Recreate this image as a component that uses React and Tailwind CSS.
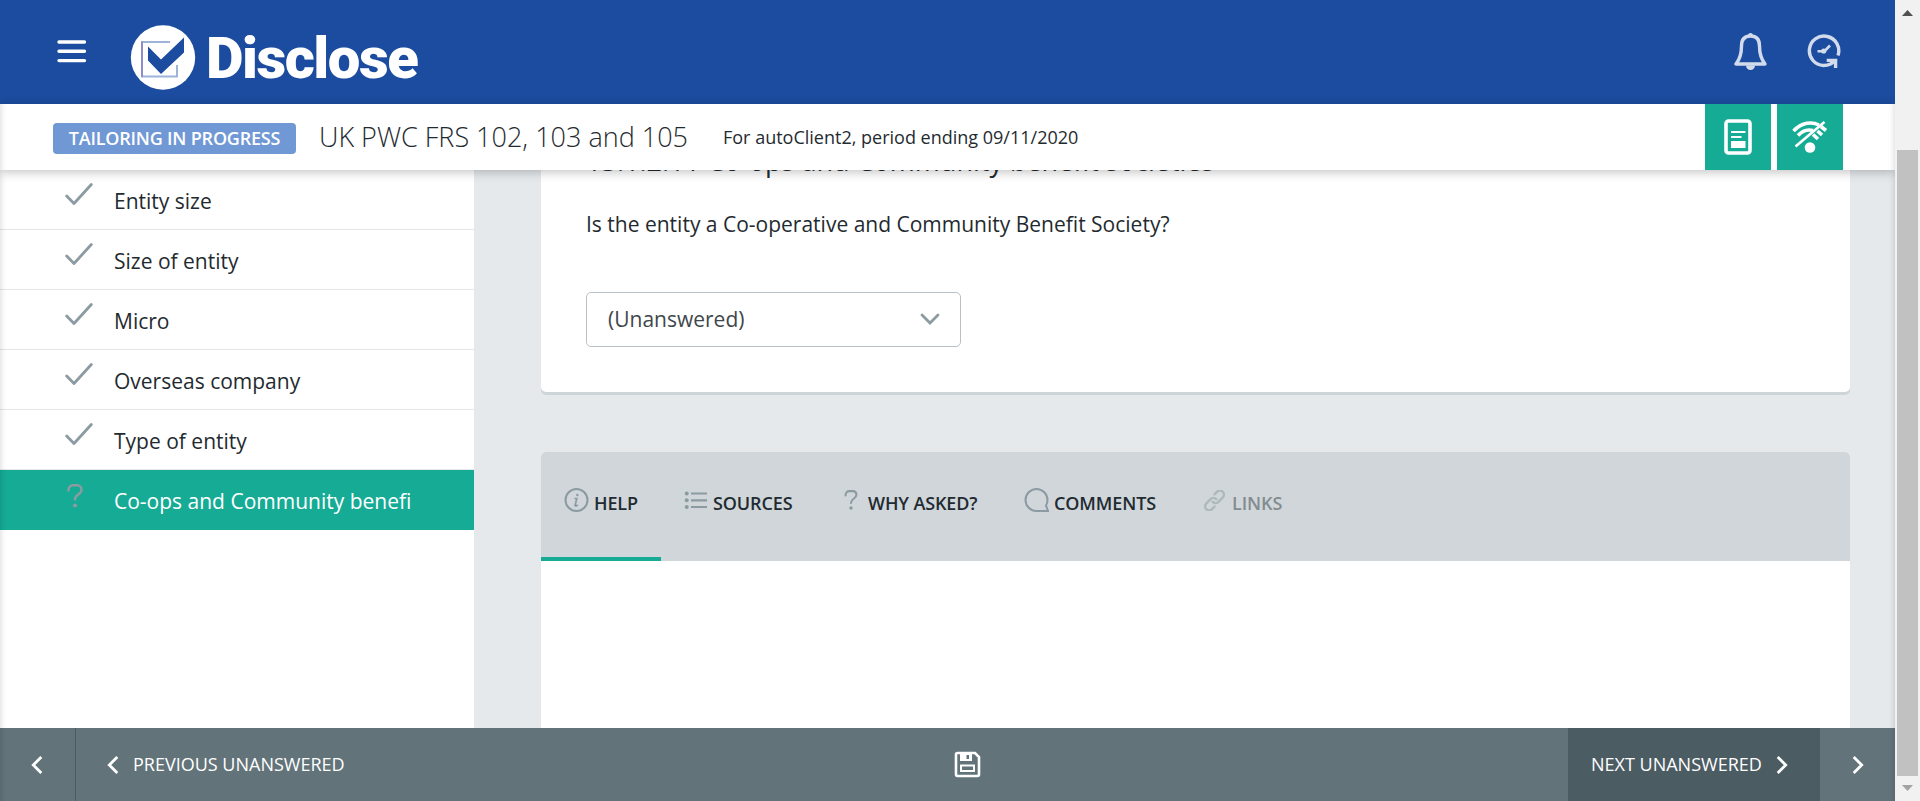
import React from "react";

const items = ["Entity size", "Size of entity", "Micro", "Overseas company", "Type of entity"];

function Logo() {
  return (
    <div className="ml-[44px] mt-[9px] flex items-center">
      <svg width="66" height="66" viewBox="0 0 66 66">
        <circle cx="33" cy="32.500" r="32.200" fill="#fff" />
        <path d="M40 17H12V51.500H47V40" fill="none" stroke="#9db3d8" strokeWidth="2" />
        <path d="M12 16.500V52" stroke="#8a7cc4" strokeWidth="1.4" />
        <path d="M18 21.500L31 34.500L54 12.500V27.500L31 49L18 35.500Z" fill="#1c4c9f" />
      </svg>
      <span className="ml-[10px] whitespace-nowrap font-[Roboto] text-[58px] leading-[66px] font-black tracking-[-1.5px] text-white">
        Disclose
      </span>
    </div>
  );
}

function Check() {
  return (
    <svg className="mt-[12px] ml-[65px] shrink-0" width="28" height="24" viewBox="0 0 28 24" fill="none" stroke="#8b9ba1" strokeWidth="2.8" strokeLinecap="round" strokeLinejoin="round">
      <path d="M1.7 14L9 21.5L26.3 2.500" />
    </svg>
  );
}

function Question({ className }) {
  return (
    <svg className={className} width="16" height="24" viewBox="0 0 16 24" fill="none" stroke="#8b9ba1" strokeWidth="2.4" strokeLinecap="round">
      <path d="M1.5 6.5C1.5 3 3.5 1.3 6 1.3H10C12.7 1.3 14.5 3 14.5 5.8C14.5 11 8 10 8 15.5" />
      <circle cx="8" cy="21.5" r="2.1" fill="#8b9ba1" stroke="none" />
    </svg>
  );
}

function Tab({ children, className }) {
  return <span className={"mt-[3px] whitespace-nowrap text-[18px] font-semibold tracking-[-0.12px] leading-[24px] " + className}>{children}</span>;
}

function Chevron({ left }) {
  return (
    <svg className="shrink-0" width="12" height="18" viewBox="0 0 12 18" fill="none" stroke="#fff" strokeWidth="2.8">
      <path d={left ? "M10.3 1L2.3 9L10.3 17" : "M1.7 1L9.7 9L1.7 17"} />
    </svg>
  );
}

export default function App() {
  return (
    <div className="flex h-[801px] w-[1920px] overflow-hidden bg-white font-['Open_Sans',sans-serif] text-[#1f2b30]">
      <div className="relative flex w-[1895px] shrink-0 flex-col overflow-hidden">
        <header className="flex h-[104px] shrink-0 items-start bg-[#1c4c9f]">
          <svg className="mt-[39px] ml-[57px]" width="30" height="25" viewBox="0 0 30 25" stroke="#fff" strokeWidth="3.4" strokeLinecap="round">
            <path d="M2 3H27.500M2 12.300H27.500M2 21.600H27.500" />
          </svg>
          <div className="mt-[16px] -ml-px"><Logo /></div>
          <div className="ml-auto mr-[54px] mt-[32px] flex">
            <svg width="34" height="40" viewBox="0.500 0 34 40" fill="none" stroke="#d2dbec" strokeWidth="3.4" strokeLinejoin="round">
              <path d="M17 4C10 4 8 9 8 14C8 22 6.500 27 2.500 32H31.500C27.500 27 26 22 26 14C26 9 24 4 17 4Z" />
              <path d="M14.500 3.500A2.500 2.500 0 0 1 19.500 3.500ZM12.500 33.500H21.500A4.500 4.500 0 0 1 12.500 33.500Z" fill="#d2dbec" stroke="none" />
            </svg>
            <svg className="ml-[39px]" width="34" height="40" viewBox="0 0 34 40" fill="none" stroke="#d2dbec" strokeWidth="3.400">
              <path d="M31 23.500A14.700 14.700 0 1 0 16.500 33.500Q20.500 33.500 23.500 32L28 29" />
              <path d="M19.700 28.400H28.600V36" />
              <path d="M10.500 19.200H17.500L23 13.500" strokeWidth="2.600" />
              <circle cx="16.700" cy="19" r="2.600" fill="#d2dbec" stroke="none" />
            </svg>
          </div>
        </header>

        <div className="z-10 flex h-[66px] shrink-0 items-center bg-white pl-[53px] shadow-[0_2px_10px_rgba(0,0,0,0.25)]">
          <div className="mt-[2px] flex h-[31px] w-[243px] items-center justify-center rounded-[4px] bg-[#6f98d5] text-[18px] font-semibold whitespace-nowrap text-white">
            <span className="tracking-[-0.2px]">TAILORING IN PROGRESS</span>
          </div>
          <span className="ml-[23px] w-[404px] text-[27px] font-light whitespace-nowrap">UK PWC FRS 102, 103 and 105</span>
          <span className="text-[18px] whitespace-nowrap">For autoClient2, period ending 09/11/2020</span>
          <div className="mr-[52px] ml-auto flex gap-[6px]">
            <div className="flex h-[66px] w-[66px] items-center justify-center bg-[#15ab95]">
              <svg width="28" height="36" viewBox="0 0 28 36" fill="none" stroke="#fff">
                <rect x="2" y="2" width="24" height="32" rx="2.500" strokeWidth="3.600" />
                <path d="M7 13H21.500M7 18H17.500" strokeWidth="2" />
                <path d="M7 22H21.500V29H7Z" fill="#fff" stroke="none" />
              </svg>
            </div>
            <div className="flex h-[66px] w-[66px] items-center justify-center bg-[#15ab95]">
              <svg width="36" height="34" viewBox="0 0 36 34" fill="none" stroke="#fff" strokeWidth="3.600">
                <path d="M1.500 11C10 2 20 1.500 27 5M6 15.500C11 10 17 9.500 21 10.500" />
                <path d="M29 6.500L34 10.500M25.500 11L30 15M21 14.500L26 19" />
                <path d="M3.500 26.500L32.500 2" strokeWidth="2.600" />
                <circle cx="18" cy="27.500" r="5.300" fill="#fff" stroke="none" />
              </svg>
            </div>
          </div>
        </div>

        <div className="flex h-[558px] shrink-0 overflow-hidden bg-[#e5e9ec]">
          <aside className="w-[474px] shrink-0 bg-white text-[21px]">
            {items.map((t) => (
              <div key={t} className="flex h-[60px] items-start border-b border-[#e5e8ea]">
                <Check />
                <span className="ml-[21px] leading-[62px]">{t}</span>
              </div>
            ))}
            <div className="flex h-[60px] items-start bg-[#15ab95] text-white">
              <Question className="mt-[14px] ml-[67px]" />
              <span className="ml-[31px] leading-[62px]">Co-ops and Community benefi</span>
            </div>
          </aside>
          <main className="ml-[67px] flex w-[1309px] flex-col">
            <section className="h-[222px] shrink-0 rounded-b-[5px] bg-white pl-[45px] shadow-[0_3px_0_#ced5d9]">
              <div className="flex h-[39px] items-end overflow-hidden">
                <h1 className="mb-[31px] -mt-[26px] text-[27px] leading-[34px] whitespace-pre">13.1.2.11 Co-ops and Community benefit societies</h1>
              </div>
              <p className="text-[21px] leading-[30px] whitespace-nowrap">Is the entity a Co-operative and Community Benefit Society?</p>
              <div className="mt-[53px] flex h-[55px] w-[375px] items-center justify-between rounded-[5px] border border-[#b9c1c7] pr-[20px] pl-[21px] text-[21px] text-[#40474b]">
                (Unanswered)
                <svg width="20" height="13" viewBox="0 0 20 13" fill="none" stroke="#8b9ba1" strokeWidth="2.800" strokeLinecap="round"><path d="M2 2L10 10L18 2" /></svg>
              </div>
            </section>
            <section className="mt-[60px] flex flex-1 flex-col rounded-t-[5px] bg-white">
              <nav className="flex h-[109px] items-start rounded-t-[5px] bg-[#d1d6da] pt-[36px]">
                <div className="-mt-[36px] flex h-[109px] w-[120px] shrink-0 border-b-4 border-[#15ab95] pt-[36px]">
                  <svg className="ml-[23px] shrink-0" width="25" height="25" viewBox="0 0 25 25" fill="none" stroke="#8b9ba1" strokeWidth="2">
                    <circle cx="12.500" cy="12" r="11" />
                    <path d="M10.500 10.500H12.800L11 17.500Q11 18.500 14 17" strokeWidth="1.700" />
                    <circle cx="13.300" cy="7" r="1.200" fill="#8b9ba1" stroke="none" />
                  </svg>
                  <Tab className="ml-[5px]">HELP</Tab>
                </div>
                <svg className="mt-[3px] ml-[23px] shrink-0" width="24" height="19" viewBox="0 0 24 19" fill="#8b9ba1" stroke="#8b9ba1" strokeWidth="2.200">
                  <path d="M7 2.500H23M7 9.300H23M7 16H23" />
                  <g stroke="none"><circle cx="2.700" cy="2.500" r="2" /><circle cx="2.700" cy="9.300" r="2" /><circle cx="2.700" cy="16" r="2" /></g>
                </svg>
                <Tab className="ml-[5px] w-[131px]">SOURCES</Tab>
                <svg className="mt-[2px] shrink-0" width="14" height="20" viewBox="0 0 16 24" fill="none" stroke="#8b9ba1" strokeWidth="2.500" strokeLinecap="round">
                  <path d="M1.500 6.500C1.500 3 3.500 1.300 6 1.300H10C12.700 1.300 14.500 3 14.500 5.800C14.500 11 8 10 8 15.500" />
                  <circle cx="8" cy="21.500" r="2.100" fill="#8b9ba1" stroke="none" />
                </svg>
                <Tab className="ml-[10px] w-[156px]">WHY ASKED?</Tab>
                <svg className="shrink-0" width="25" height="25" viewBox="0 0 25 25" fill="none" stroke="#8b9ba1" strokeWidth="2">
                  <path d="M23.500 12A11 11 0 1 0 12.500 23H24L22 17.500Q23.500 15 23.500 12Z" />
                </svg>
                <Tab className="ml-[5px] w-[150px]">COMMENTS</Tab>
                <svg className="mt-[2px] shrink-0" width="21" height="21" viewBox="0 0 24 24" fill="none" stroke="#afb8bd" strokeWidth="2.800" strokeLinecap="round">
                  <path d="M10 13.500a4.600 4.600 0 0 0 6.500 0l5-5a4.600 4.600 0 0 0-6.500-6.500l-3 3M14 10.500a4.600 4.600 0 0 0-6.500 0l-5 5a4.600 4.600 0 0 0 6.500 6.500l3-3" />
                </svg>
                <Tab className="ml-[7px] text-[#838c91]">LINKS</Tab>
              </nav>
            </section>
          </main>
        </div>

        <footer className="flex h-[73px] shrink-0 items-center bg-[#62737a] text-[18px] text-white">
          <div className="flex h-full w-[76px] items-center justify-center border-r border-[#4c5c63] pr-[1px]"><Chevron left /></div>
          <div className="ml-[31px] flex w-[847px] items-center gap-[14px]"><Chevron left /><span>PREVIOUS UNANSWERED</span></div>
          <svg width="27" height="27" viewBox="0 0 27 27" fill="none" stroke="#fff" strokeWidth="2.600">
            <path d="M2 3.500Q2 2 3.500 2H21L25 6V23.500Q25 25 23.500 25H3.500Q2 25 2 23.500Z" />
            <path d="M7 14.500H20V20H7Z" strokeWidth="2" />
            <path d="M6 2H18V10H6ZM12.500 4V8H15V4Z" fill="#fff" fillRule="evenodd" stroke="none" />
          </svg>
          <div className="ml-auto flex h-full w-[252px] items-center bg-[#4c5c63] pl-[23px]"><span className="mr-[14px] whitespace-nowrap">NEXT UNANSWERED</span><Chevron /></div>
          <div className="flex h-full w-[75px] items-center justify-center"><Chevron /></div>
        </footer>
        <div className="pointer-events-none absolute inset-x-0 top-[104px] bottom-0 z-20 shadow-[inset_8px_0_7px_-8px_rgba(0,0,0,0.18),inset_-8px_0_7px_-8px_rgba(0,0,0,0.18)]" />
      </div>
      <div className="flex w-[25px] flex-col items-center bg-[#f1f1f1]">
        <svg className="mt-[9px] shrink-0" width="11" height="7"><path d="M0 7L5.500 1L11 7Z" fill="#505050" /></svg>
        <div className="mt-[134px] h-[626px] w-[21px] shrink-0 bg-[#c1c1c1]" />
        <svg className="mt-[8px] shrink-0" width="11" height="7"><path d="M0 1L5.500 7L11 1Z" fill="#a3a3a3" /></svg>
      </div>
    </div>
  );
}
